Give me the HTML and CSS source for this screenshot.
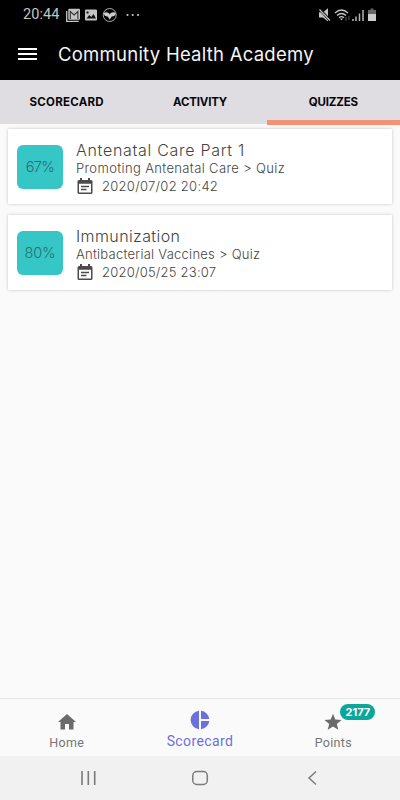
FILE: index.html
```html
<!DOCTYPE html>
<html lang="en">
<head>
  <meta charset="UTF-8" />
  <meta name="viewport" content="width=device-width, initial-scale=1" />
  <title>Community Health Academy</title>
  <link rel="stylesheet" href="styles.css">
</head>
<body>
  <div class="status-bar">
    <span class="clock">20:44</span>
    <svg class="status-left" width="80" height="16" viewBox="0 0 80 16">
      <path d="M1.700 4v10.300h12" fill="none" stroke="#c4c4c4" stroke-width="1.300" />
      <rect x="3.300" y="1.700" width="11.700" height="11" rx="1" fill="#c4c4c4" />
      <path d="M5.300 12V4.500L9.100 8l3.800-3.500V12" fill="none" stroke="#333" stroke-width="1.100" />
      <rect x="20" y="2.500" width="12" height="11" rx="1" fill="#c4c4c4" />
      <path d="M21.500 11.500l2.800-3.500 2 2 2.200-3 2.500 4.500z" fill="#111" />
      <path d="M21.500 4.500h2v2h-2z" fill="#111" />
      <circle cx="44.700" cy="8" r="6.500" fill="none" stroke="#aaa" stroke-width="1" />
      <path d="M38.500 6c2.500-1.500 5-1 6.200 1.200C46 5 48.500 4.500 51 6c-.5 2.500-2 3.500-4.200 3.500l-2.100 3-2.100-3C40.400 9.500 39 8.500 38.500 6z" fill="#ccc" />
      <g fill="#c4c4c4"><circle cx="62.500" cy="8" r="1.100" /><circle cx="67.700" cy="8" r="1.100" /><circle cx="73" cy="8" r="1.100" /></g>
    </svg>
    <svg class="status-right" width="60" height="16" viewBox="0 0 60 16">
      <path d="M1 5.300h4l5-4v13.200l-5-4H1z" fill="#c4c4c4" />
      <path d="M1 1.500l11 12" stroke="#000" stroke-width="2.600" />
      <path d="M1.500 2.500L12 13.500" stroke="#c4c4c4" stroke-width="1.200" />
      <g fill="none" stroke="#c4c4c4" stroke-width="1.300">
        <path d="M17 6q6.500-6 13 0M19 8.500q4.500-4 9 0M21 10.700q2.500-2 5 0" />
      </g>
      <path d="M22 11.500h3l-1.500 2z" fill="#c4c4c4" />
      <path d="M28 10v4M31 9v4" stroke="#555" />
      <path d="M35 14v-2M38 14v-4.500M41.500 14V6.500M45 14V3" stroke="#b5b5b5" stroke-width="1.500" />
      <path d="M50 3h2.500V1.500h3V3H58v4h-8z" fill="#666" />
      <rect x="50" y="7" width="8" height="7" fill="#ccc" />
    </svg>
  </div>

  <header class="app-bar">
    <svg class="menu-icon" width="19" height="14" viewBox="0 0 19 14">
      <path d="M0 2h19M0 7h19M0 12h19" stroke="#fff" stroke-width="2" />
    </svg>
    <h1>Community Health Academy</h1>
  </header>

  <nav class="tabs">
    <a class="tab wide">SCORECARD</a>
    <a class="tab">ACTIVITY</a>
    <a class="tab active">QUIZZES</a>
  </nav>

  <main>
    <article class="card antenatal">
      <div class="score">67%</div>
      <div class="details">
        <h2>Antenatal Care Part 1</h2>
        <p>Promoting Antenatal Care &gt; Quiz</p>
        <div class="date">
          <svg width="16" height="17" viewBox="0 0 16 17">
            <path fill="#4b4b4b" fill-rule="evenodd" d="M2 2h1V0h2v2h6V0h2v2h1q1.500 0 1.500 1.500v11Q15.500 16 14 16H2Q.5 16 .5 14.500v-11Q.5 2 2 2zM2 5.800v8.700h12V5.800z" />
            <path d="M4 8.500h8M4 11.500h5.500" stroke="#4b4b4b" stroke-width="1.500" />
          </svg>
          <time>2020/07/02 20:42</time>
        </div>
      </div>
    </article>

    <article class="card immunization">
      <div class="score">80%</div>
      <div class="details">
        <h2>Immunization</h2>
        <p>Antibacterial Vaccines &gt; Quiz</p>
        <div class="date">
          <svg width="16" height="17" viewBox="0 0 16 17">
            <path fill="#4b4b4b" fill-rule="evenodd" d="M2 2h1V0h2v2h6V0h2v2h1q1.500 0 1.500 1.500v11Q15.500 16 14 16H2Q.5 16 .5 14.500v-11Q.5 2 2 2zM2 5.800v8.700h12V5.800z" />
            <path d="M4 8.500h8M4 11.500h5.500" stroke="#4b4b4b" stroke-width="1.500" />
          </svg>
          <time>2020/05/25 23:07</time>
        </div>
      </div>
    </article>
  </main>

  <nav class="bottom-nav">
    <a class="nav-item">
      <svg width="18" height="18" viewBox="0 0 18 18"><path d="M9 1l9 8h-2.500v7.500H11v-5.500H7v5.500H2.500V9H0z" fill="#6b6b6b" /></svg>
      <span>Home</span>
    </a>
    <a class="nav-item active">
      <svg width="20" height="20" viewBox="0 0 20 20"><path d="M9 .7v18.600A9.350 9.350 0 0 1 9 .7zM11 .7A9.300 9.300 0 0 1 19.300 9H11zM11 11h8.300a9.300 9.300 0 0 1-8.300 8.300z" fill="#6c70dc" /></svg>
      <span>Scorecard</span>
    </a>
    <a class="nav-item">
      <span class="badge-anchor">
        <svg width="18" height="18" viewBox="0 0 18 18"><path d="M9 .8l2.300 5.600 6.200.5-4.700 4 1.500 5.900L9 13.600l-5.300 3.200 1.500-5.900-4.700-4 6.200-.5z" fill="#6b6b6b" /></svg>
        <b class="badge">2177</b>
      </span>
      <span>Points</span>
    </a>
  </nav>

  <div class="system-nav">
    <svg width="16" height="16" viewBox="0 0 16 16"><path d="M2 1v14M8.300 1v14M14.700 1v14" stroke="#7b7b7b" stroke-width="1.600" /></svg>
    <svg width="18" height="16" viewBox="0 0 18 16"><rect x="1.800" y="1.500" width="14.500" height="13" rx="4" fill="none" stroke="#7b7b7b" stroke-width="1.500" /></svg>
    <svg width="16" height="16" viewBox="0 0 16 16"><path d="M12 1.500L5 8l7 6.500" fill="none" stroke="#7b7b7b" stroke-width="1.500" /></svg>
  </div>
</body>
</html>
```
FILE: styles.css
```css
* { box-sizing: border-box; }

body {
  display: flex;
  flex-direction: column;
  height: 100vh;
  margin: 0;
  background: #fafafa;
  color: #444;
  font-family: Inter, "Liberation Sans", sans-serif;
  overflow: hidden;
}

h1, h2, p { margin: 0; }
svg { display: block; flex: none; }

.status-bar {
  display: flex;
  align-items: center;
  height: 29px;
  padding: 0 22px 0 23px;
  background: #000;
}

.clock {
  width: 42px;
  color: #c4c4c4;
  font: 14.5px/29px Roboto, sans-serif;
  letter-spacing: 0.1px;
}

.status-right { margin-left: auto; }

.app-bar {
  display: flex;
  align-items: center;
  gap: 21px;
  height: 51px;
  padding: 0 0 2px 18px;
  background: #000;
  color: #f5f5f5;
}

.app-bar h1 {
  padding-top: 1px;
  font-size: 18.5px;
  font-weight: 400;
  letter-spacing: 0.25px;
  white-space: nowrap;
}

.tabs {
  display: grid;
  grid-template-columns: repeat(3, 1fr);
  height: 44px;
  background: #dfdde2;
}

.tab {
  padding-top: 5px;
  border-bottom: 5px solid transparent;
  color: #080808;
  font-size: 11.5px;
  font-weight: 700;
  letter-spacing: -0.2px;
  line-height: 35px;
  text-align: center;
}

.tab.wide { letter-spacing: 0.25px; }
.tab.active { border-color: #f39275; }

main {
  display: flex;
  flex: 1;
  flex-direction: column;
  gap: 11px;
  padding: 5px 8px;
}

.card {
  display: flex;
  align-items: center;
  gap: 13px;
  height: 75px;
  padding-left: 9px;
  background: #fff;
  box-shadow: 0 0 3px rgba(0, 0, 0, 0.22);
}

.score {
  width: 46px;
  height: 44px;
  border-radius: 6px;
  background: #37c6c6;
  color: #2a6d70;
  font-size: 14.5px;
  font-weight: 300;
  letter-spacing: -0.7px;
  line-height: 44px;
  text-align: center;
}

.immunization .score { letter-spacing: -0.2px; }

.details {
  padding-top: 2px;
  white-space: nowrap;
}

.details h2 {
  font-size: 16px;
  font-weight: 300;
  line-height: 20px;
}

.details p {
  font-size: 13px;
  font-weight: 300;
  line-height: 17px;
}

.antenatal h2 { letter-spacing: 0.7px; }
.antenatal p { letter-spacing: 0.37px; }
.antenatal time { letter-spacing: 0.28px; }
.immunization h2 { letter-spacing: 0.4px; }
.immunization p { letter-spacing: 0.26px; }
.immunization time { letter-spacing: 0.22px; }

.date {
  display: flex;
  align-items: center;
  gap: 9px;
  height: 19px;
  padding-left: 1px;
  font-size: 13px;
  font-weight: 300;
}

.bottom-nav {
  display: grid;
  grid-template-columns: repeat(3, 1fr);
  height: 58px;
  border-top: 1px solid #e6e6e6;
}

.nav-item {
  display: flex;
  flex-direction: column;
  align-items: center;
  gap: 4px;
  padding-top: 14px;
  color: #757575;
  font: 12.5px/15px Roboto, sans-serif;
  letter-spacing: 0.3px;
}

.nav-item.active {
  padding-top: 11px;
  color: #6c70dc;
  font-size: 14px;
  letter-spacing: 0.4px;
}

.badge-anchor { position: relative; }

.badge {
  position: absolute;
  top: -9px;
  left: 16px;
  width: 35px;
  height: 16px;
  border-radius: 8px;
  background: #0ca79b;
  color: #fff;
  font: 700 11px/16px Inter, sans-serif;
  letter-spacing: 0;
  text-align: center;
}

.system-nav {
  display: flex;
  align-items: center;
  justify-content: center;
  gap: 95px;
  height: 44px;
  background: #f1f1f1;
}
```
